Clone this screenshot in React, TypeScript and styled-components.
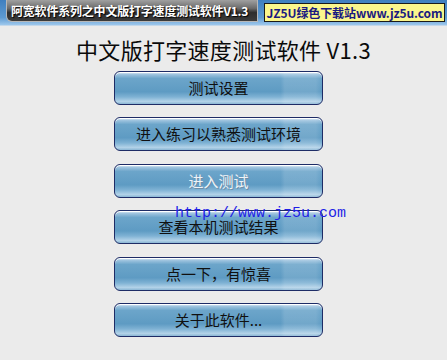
import React from "react";
import styled, { createGlobalStyle, css } from "styled-components";

const GlobalStyle = createGlobalStyle`
  html, body {
    margin: 0;
    padding: 0;
    background: #ebebeb;
  }
`

const menuItems = [
    { label: "测试设置", disabled: false },
    { label: "进入练习以熟悉测试环境", disabled: false },
    { label: "进入测试", disabled: true },
    { label: "查看本机测试结果", disabled: false },
    { label: "点一下，有惊喜", disabled: false },
    { label: "关于此软件...", disabled: false },
]

export default function App() {
    return (
        <Window>
            <GlobalStyle/>
            <TitleBar>
                <Caption>阿宽软件系列之中文版打字速度测试软件V1.3</Caption>
                <Badge>JZ5U绿色下载站www.jz5u.com</Badge>
            </TitleBar>
            <Body>
                <Heading>中文版打字速度测试软件 V1.3</Heading>
                <ButtonList>
                    {menuItems.map((item) => (
                        <MenuButton key={item.label} $disabled={item.disabled}>
                            {item.label}
                        </MenuButton>
                    ))}
                </ButtonList>
                <SiteStamp>http://www.jz5u.com</SiteStamp>
            </Body>
        </Window>
    );
}

const Window = styled.div`
  width: 447px;
  height: 360px;
  background: #ebebeb;
  overflow: hidden;
  font-family: "Noto Sans CJK SC", "Liberation Sans", sans-serif;
`

const TitleBar = styled.div`
  height: 26px;
  display: flex;
  align-items: flex-start;
  padding-left: 6px;
  box-sizing: border-box;
  background: linear-gradient(to bottom, #3f7fbf 0%, #5d9ad2 70%, #9ec8ec 100%);
  border-bottom: 1px solid #c4d8ea;
`

const Caption = styled.div`
  width: 252px;
  height: 22px;
  box-sizing: border-box;
  padding-left: 4px;
  display: flex;
  align-items: center;
  border: 1px solid #b8b8b8;
  border-top: none;
  border-radius: 0 0 0 6px;
  background: linear-gradient(to bottom, #a0a0a0 0%, #6a6a6a 40%, #2e2e2e 60%, #3c3c3c 100%);
  color: #ffffff;
  font-size: 12px;
  font-weight: bold;
  letter-spacing: -0.2px;
  white-space: nowrap;
  text-shadow: 1px 1px 1px #000000;
`

const Badge = styled.div`
  margin-left: 6px;
  margin-top: 3px;
  width: 181px;
  height: 19px;
  box-sizing: border-box;
  display: flex;
  align-items: center;
  justify-content: center;
  background: #fbf68c;
  border: 1px solid #1a1a1a;
  color: #1a1a80;
  font-size: 12px;
  font-weight: bold;
  letter-spacing: -0.1px;
  white-space: nowrap;
  overflow: hidden;
`

const Body = styled.div`
  position: relative;
  display: flex;
  flex-direction: column;
  align-items: center;
  padding-top: 8px;
`

const Heading = styled.h1`
  margin: 0;
  height: 37px;
  font-size: 22px;
  font-weight: 400;
  line-height: 30px;
  color: #0a0a0a;
  letter-spacing: 0.3px;
  white-space: nowrap;
`

const ButtonList = styled.div`
  align-self: flex-start;
  margin-left: 114px;
  display: flex;
  flex-direction: column;
  gap: 12.4px;
`

const disabledText = css`
  color: #eef3f8;
  text-shadow: 1px 1px 0 #6f8fa8;
`

const MenuButton = styled.button<{ $disabled: boolean }>`
  width: 209px;
  height: 34px;
  padding: 0;
  border: 1px solid #1e2c66;
  border-radius: 6px;
  background:
    linear-gradient(to right, rgba(255, 255, 255, 0) 80%, rgba(255, 255, 255, 0.12) 82%, rgba(255, 255, 255, 0.12) 97%, rgba(255, 255, 255, 0) 100%),
    linear-gradient(to bottom, #e6f0f8 0%, #9cc2de 8%, #6ca5ca 20%, #5e9bc3 62%, #7fb2d4 78%, #b2d2e8 92%, #8ab6d4 100%);
  box-shadow: inset 0 1px 0 #ffffff;
  font-family: "Noto Sans CJK SC", "Liberation Sans", sans-serif;
  font-size: 15px;
  line-height: 20px;
  color: #101010;
  cursor: pointer;
  ${(props) => props.$disabled && disabledText}
`

const SiteStamp = styled.div`
  position: absolute;
  left: 175px;
  top: 179px;
  font-family: "Liberation Mono", "DejaVu Sans Mono", monospace;
  font-size: 15px;
  line-height: 18px;
  color: #1f1fe6;
  white-space: nowrap;
  pointer-events: none;
`
